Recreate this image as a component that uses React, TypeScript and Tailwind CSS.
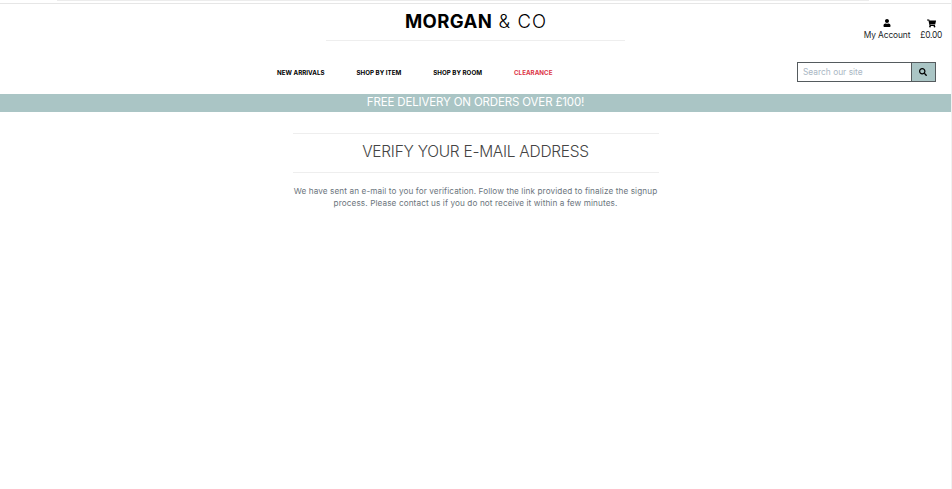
import { FaSearch, FaShoppingCart, FaUser } from "react-icons/fa";

export default function App() {
  return (
    <div className="flex h-[489px] w-[952px] flex-col overflow-hidden border-r border-[#f1f1f1] bg-white font-['Inter','Liberation_Sans',sans-serif] text-black">
      <div className="flex h-1 shrink-0 justify-center border-b border-[#e6e6e6] pr-[25px]">
        <div className="h-px w-[812px] bg-[#ececec]" />
      </div>
      <header className="grid h-[90px] shrink-0 grid-cols-[326px_299px_1fr] grid-rows-[37px_53px]">
        <div className="col-start-2 flex h-[37px] items-start justify-center border-b border-[#eeeeee] pt-[5px] pl-px text-[18.5px] leading-6 whitespace-pre">
          <span className="font-bold tracking-[0.4px]">MORGAN</span>
          <span className="font-light tracking-[1.1px]"> &amp; CO</span>
        </div>
        <div className="col-start-3 flex justify-end gap-[10px] pt-[15px] pr-[9px] text-[8.4px] text-[#212529]">
          <a className="flex flex-col items-center">
            <FaUser className="size-2 text-black" />
            <span className="mt-[2px] leading-3 tracking-[-0.12px] whitespace-nowrap">My Account</span>
          </a>
          <a className="flex flex-col items-center">
            <FaShoppingCart className="size-[9px] text-black" />
            <span className="mt-px leading-3 tracking-[-0.25px]">£0.00</span>
          </a>
        </div>
        <nav className="col-span-2 col-start-1 row-start-2 flex gap-8 pt-[26px] pl-[277px] text-[6.2px] leading-3 font-bold tracking-[0.03px] whitespace-nowrap">
          <a>NEW ARRIVALS</a>
          <a>SHOP BY ITEM</a>
          <a>SHOP BY ROOM</a>
          <a className="text-[#dc3545]">CLEARANCE</a>
        </nav>
        <form className="col-start-3 row-start-2 mt-[21px] mr-[15px] flex h-5 w-[139px] justify-self-end border border-[#555b5e]">
          <input
            className="w-[113px] min-w-0 shrink-0 pr-1.5 pl-[5px] text-[8.4px] outline-none placeholder:text-[#aab7c4]"
            placeholder="Search our site"
          />
          <button type="button" className="flex flex-1 items-center justify-center border-l border-[#555b5e] bg-[#aac5c5] pr-px">
            <FaSearch className="size-2" />
          </button>
        </form>
      </header>
      <div className="flex h-[18px] shrink-0 items-center justify-center bg-[#aac5c5] text-[11.5px] tracking-[-0.15px] text-white">
        FREE DELIVERY ON ORDERS OVER £100!
      </div>
      <main className="mx-auto mt-[21px] w-[366px] text-center">
        <h1 className="flex h-10 items-center justify-center border-y border-[#eeeeee] pb-[3px] text-[15.5px] font-[350] tracking-[-0.27px] text-[#444444]">
          VERIFY YOUR E-MAIL ADDRESS
        </h1>
        <p className="mt-3 text-[8.2px] leading-3 tracking-[0.1px] whitespace-nowrap text-[#6c757d]">
          We have sent an e-mail to you for verification. Follow the link provided to finalize the signup
          <br />
          process. Please contact us if you do not receive it within a few minutes.
        </p>
      </main>
    </div>
  );
}
